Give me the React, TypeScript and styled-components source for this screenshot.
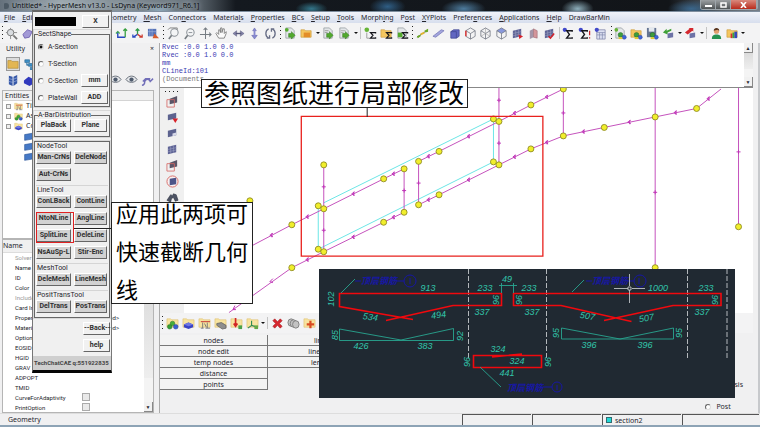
import React from "react";
import styled, { createGlobalStyle, css } from "styled-components";

const Global = createGlobalStyle`
  * { box-sizing: border-box; }
  html, body, #root { height: 100%; margin: 0; }
  body { overflow: hidden; font: 7px/10px "Noto Sans", sans-serif; color: #26262e; background: #f0f0f0; }
  button, input, fieldset, legend, h2, ul, p { margin: 0; padding: 0; font: inherit; color: inherit; border: 0; }
  ul { list-style: none; }
  svg { display: block; }
`;

/* ---------- window frame ---------- */

const Window = styled.div`
  position: relative;
  display: flex;
  flex-direction: column;
  height: 100vh;
  background: #f0f0f1;
  border-bottom: 2px solid #8da3b5;
`;

const TitleBar = styled.header`
  display: flex;
  align-items: center;
  justify-content: space-between;
  flex: 0 0 12px;
  padding: 0 2px 0 4px;
  background:
    radial-gradient(ellipse 16px 8px at 21% 100%, #8ba6b8, transparent),
    radial-gradient(ellipse 16px 7px at 41% 80%, #33768a, transparent),
    radial-gradient(ellipse 18px 9px at 51% 60%, #2f5e85, transparent),
    radial-gradient(ellipse 22px 9px at 61% 80%, #4d7b9d, transparent),
    radial-gradient(ellipse 16px 9px at 76% 80%, #8daebb, transparent),
    radial-gradient(ellipse 24px 9px at 91% 80%, #3a668b, transparent),
    linear-gradient(90deg, #65717c 0, #9ba7ae 8%, #7b878f 18%, #6a757e 25%, #14191f 31%, #121519 88%, #59636c 95%, #777f88 100%);
  border-bottom: 1px solid #7f8e9e;
`;

const Title = styled.h1`
  display: flex;
  align-items: center;
  gap: 2px;
  margin: 0;
  font: 7px/11px "Noto Sans", sans-serif;
  color: #0b0d10;
  text-shadow: 0 0 4px #c3ccd2;
  white-space: nowrap;
`;

const WindowButtons = styled.div`
  display: flex;
  align-self: flex-start;
  border: 1px solid #9ea6ac;
  border-top: 0;
  border-radius: 0 0 3px 3px;
  overflow: hidden;
`;

const WindowButton = styled.button<{ $close?: boolean }>`
  display: grid;
  place-items: center;
  width: ${(p) => (p.$close ? 26 : 15)}px;
  height: 9px;
  background: ${(p) => (p.$close ? "linear-gradient(#d98a7d, #b92b1c)" : "linear-gradient(#9b9fa2, #4f5456)")};
  border-right: 1px solid #9ea6ac;
`;

const MenuBar = styled.nav`
  display: flex;
  align-items: center;
  gap: 7px;
  flex: 0 0 11px;
  padding: 0 4px;
  background: linear-gradient(#f0f3fa, #d7deed);
`;

const MenuItem = styled.button`
  background: none;
  line-height: 10px;
  white-space: nowrap;
  u { text-underline-offset: 1px; }
`;

const ToolBar = styled.div<{ $bottom?: boolean }>`
  display: flex;
  flex: 0 0 20px;
  background: #f3f3f4;
  ${(p) => p.$bottom && css`
    gap: 2px;
    padding-left: 2px;
    align-items: center;
  `}
`;

const ToolGroup = styled.div<{ $grow: number }>`
  display: flex;
  flex: ${(p) => p.$grow} 1 0;
  align-items: center;
  justify-content: space-between;
  padding: 0 1px 0 2px;
`;

const ToolButton = styled.button`
  display: grid;
  place-items: center;
  width: 14px;
  height: 14px;
  background: none;
`;

const Grip = styled.span<{ $across?: boolean }>`
  flex: none;
  width: ${(p) => (p.$across ? 14 : 1)}px;
  height: ${(p) => (p.$across ? 1 : 14)}px;
  background: repeating-linear-gradient(${(p) => (p.$across ? "90deg" : "180deg")}, #222 0 1px, transparent 1px 4px);
`;

const Separator = styled.span`
  width: 1px;
  height: 12px;
  background: #c4c4c4;
`;

const DropMark = styled.span`
  width: 4px;
  border: 2px solid transparent;
  border-top-color: #111;
  border-bottom: 0;
`;

/* ---------- icons ---------- */

const folder = <path d="M1 3h4l1 1h6v7H1z" fill="#f4c65f" stroke="#cb9b3c" strokeWidth=".7" />;
const paleFolder = <path d="M1 2h4l1 1h7v8H1z" fill="#f8e4a0" stroke="#dcbc69" strokeWidth=".6" />;
const page = <path d="M2 1h6l3 3v8H2z" fill="#e3e6e9" stroke="#92989d" strokeWidth=".8" />;
const sigma = <path d="M12.5 7V6H7l2.7 3L7 12h5.5v-1" fill="none" stroke="#16161c" strokeWidth="1.3" />;
const greenArrow = <path d="M5 7h3V5l4 4-4 4v-2H5z" fill="#52a92d" stroke="#297116" strokeWidth=".5" />;
const blobs = <g strokeWidth=".5"><circle cx="7" cy="8.5" r="2.6" fill="#3c9d3c" stroke="#206220" /><circle cx="11" cy="11" r="2.2" fill="#3e64d8" stroke="#213b98" /><path d="M5 11h4v2H5z" fill="#e3cd31" /></g>;
const mesh = <><path d="M2 4l9-2v8l-9 2z" fill="#5f6496" /><path d="M2 7l9-2M2 9.500l9-2M5 3.300v8M8 2.700v8" stroke="#a5a9c9" strokeWidth=".5" /></>;
const cubeLines = <path d="M2 4l5-3 5 3v6l-5 3-5-3zM2 4l5 3 5-3M7 7v6" fill="none" stroke="#6a707c" strokeWidth=".8" />;
const lens = <><circle cx="8" cy="6" r="4" fill="#f4f5f6" stroke="#8b9197" strokeWidth="1.100" /><path d="M5 9l-3 4" stroke="#777d82" strokeWidth="1.800" /></>;

const glyphs: Record<string, React.ReactNode> = {
  fit: <><path d="M6 1v12M1 6h12" stroke="#777" strokeWidth=".8" /><circle cx="6" cy="6" r="3.500" fill="#d9dce0" stroke="#777" /><path d="M9 9l4 4" stroke="#777" strokeWidth="2" /></>,
  rotateBox: <path d="M2 8l5-5 5 2-3 6-5 1z" fill="#a299d6" stroke="#7465b2" />,
  axesXZ: <><path d="M3 5v6h8" fill="none" stroke="#2947c2" strokeWidth="1.500" /><path d="M1 7l2-2 2 2" fill="none" stroke="#3ba350" strokeWidth="1.200" /><path d="M11 11V2M9 4l2-2 2 2" fill="none" stroke="#38a041" strokeWidth="1.400" /></>,
  axesIso: <g fill="none" strokeWidth="1.400"><path d="M7 8V2M5 4l2-2 2 2" stroke="#2e9a47" /><path d="M7 8l-5 3M2 8v3h3" stroke="#2947c2" /><path d="M7 8l5 3M12 8v3H9" stroke="#cd3b2f" /></g>,
  viewCube: <><path d="M1 2h9v8H1z" fill="#5673b8" /><path d="M3 2v8M5.500 2v8M1 5h9" stroke="#a9bae2" strokeWidth=".6" /><path d="M8 7l5 5H6z" fill="#d65b2d" /></>,
  zoomBack: <>{lens}<path d="M1 3l2-2h8v2" fill="none" stroke="#777" strokeWidth=".9" /></>,
  zoom: <>{lens}<path d="M6 6h4" stroke="#8b9197" /></>,
  cross: <path d="M7 1v12M1 8h12M5 3l2-2 2 2M11 6l2 2-2 2" fill="none" stroke="#767c83" strokeWidth="1.100" />,
  hand: <path d="M4 12L1 7l1-1 2 2V3h1l1 3V1h1.500v5l1-4H10v5l2-2v2l-2 5z" fill="#fafafa" stroke="#777" strokeWidth=".9" />,
  leftRight: <><path d="M1 7l4-3v6zM13 7L9 4v6z" fill="#8282a8" stroke="#565678" strokeWidth=".5" /><path d="M4 7h6" stroke="#565678" strokeWidth="1.500" /></>,
  upDown: <><path d="M7 1L5 4h4zM7 13l-3-4h6z" fill="#8789cf" stroke="#5658a5" strokeWidth=".5" /><path d="M7 3v7" stroke="#8789cf" strokeWidth="2" /></>,
  spin: <path d="M5 2C1 4 1 10 5 12M3 12h3v-3M9 2c4 2 4 8 0 10M11 2H8v3" fill="none" stroke="#686e86" strokeWidth="1.400" />,
  newPage: <>{page}{greenArrow}<circle cx="3" cy="3" r="2" fill="#55ac2e" /></>,
  openFolder: <>{folder}<path d="M4 6h7v5H4z" fill="#e38d28" /></>,
  utilityFolder: <path d="M1 3h4l1 1h7v8H1z" fill="#e2b653" stroke="#ad842d" strokeWidth=".7" />,
  savePage: <>{page}<path d="M3 4h4M3 6h3" stroke="#999" />{greenArrow}</>,
  exportPage: <>{page}<path d="M3 4h5M3 6h3" stroke="#aaa" />{greenArrow}</>,
  addSigma: <><circle cx="3" cy="3" r="2.500" fill="#66b536" /><path d="M3 6v6h3" fill="none" stroke="#999" />{sigma}</>,
  folderSigma: <>{folder}{sigma}</>,
  pageSigma: <>{page}<path d="M2 6h5v5H2z" fill="#52a92d" />{sigma}</>,
  segment: <><path d="M1 11l12-8" stroke="#60686f" /><path d="M1 10l4-2v2l-3 2zM9 4l4-2v3l-3 1z" fill="#6aa826" /><path d="M5 8l4-2" stroke="#e1b52f" strokeWidth="2" /></>,
  beam: <path d="M1 10l9-7 3 1-9 7z" fill="#a3a5dd" stroke="#7779b8" strokeWidth=".8" />,
  solid: <path d="M3 5l3-2h6v7l-3 2H3zM3 5h6v7" fill="#6267c2" stroke="#41468f" strokeWidth=".8" />,
  cubeRed: <>{cubeLines}<path d="M2 4v6" stroke="#df3131" strokeWidth="1.500" /></>,
  cubeWire: <>{cubeLines}<path d="M7 1v6M2 10l5-3 5 3" fill="none" stroke="#999" strokeWidth=".6" /></>,
  cubeBlue: <><path d="M2 4l5-3 5 3-5 3z" fill="#8998dc" />{cubeLines}</>,
  mesh,
  meshRed: <>{mesh}<path d="M8 8l5 2-4 3z" fill="#d8222a" /></>,
  meshPink: <><path d="M3 4l4-2v9l-4 2z" fill="#a495a9" /><path d="M7 2l4 2v8l-4-1z" fill="#d4959a" stroke="#8b5560" strokeWidth=".5" /></>,
  meshCheck: <>{mesh}<path d="M6 10l2 2 4-5" fill="none" stroke="#d2232b" strokeWidth="1.700" /></>,
  meshBox: <><path d="M4 4l8-3v7l-8 2z" fill="#5a5668" /><path d="M1 5h8v8H1z" fill="none" stroke="#d66a66" strokeWidth=".9" /></>,
  meshRing: <><circle cx="7" cy="7" r="6" fill="#faf1f1" stroke="#d66a66" /><path d="M4 4l7-1v7l-7 1z" fill="#4d5488" /></>,
  meshHeart: <><path d="M2 4l9-2v6l-9 2z" fill="#5c628f" /><path d="M7 8h6l-3 5z" fill="#d8222a" /></>,
  meshSmall: <><path d="M2 4l9-2v7l-9 2z" fill="#5c628f" /><path d="M7 7l4-1v3l-4 1z" fill="#d6d8e8" /></>,
  binoculars: <path d="M1 10l4-6 2 1 1-2 3 1 2 6-3 1-2-4-2 1-1 4z" fill="#4d5364" stroke="#2a2f3d" strokeWidth=".6" />,
  sumInfo: <><circle cx="3" cy="3" r="2.300" fill="#4149c9" /><path d="M11 5V4H5l3 4-3 4h6v-1" fill="none" stroke="#16161c" strokeWidth="1.500" /></>,
  sumAlert: <><circle cx="3" cy="3" r="2.300" fill="#4149c9" /><path d="M10 5V4H4l3 4-3 4h6v-1" fill="none" stroke="#16161c" strokeWidth="1.500" /><path d="M12.500 4v5M12.500 11v1.500" stroke="#c7202a" strokeWidth="1.300" /></>,
  calc: <><path d="M3 3h9v10H3z" fill="#dce0f1" stroke="#7c83a8" strokeWidth=".8" /><path d="M3 6h9M3 8.500h9M6 6v7M9 6v7" stroke="#7c83a8" strokeWidth=".7" /><circle cx="3" cy="3" r="2.300" fill="#4149c9" /></>,
  newBlobs: <>{page}{blobs}<circle cx="2.500" cy="3" r="2" fill="#68b435" /></>,
  folderBlobs: <>{folder}{blobs}</>,
  disk: <><path d="M1 1h10v10H1z" fill="#657492" /><path d="M3 1h6v4H3z" fill="#e4e9ef" />{blobs}</>,
  importMesh: <><path d="M1 6l4-4v2l5-2v2L6 6v2z" fill="#40a137" /><path d="M6 7l6-1v5l-6 1z" fill="#6d72a6" /></>,
  exportMesh: <><path d="M1 6l5-4-1-1h5v4L9 4 4 8z" fill="#d4282e" /><path d="M6 7l6-1v5l-6 1z" fill="#6d72a6" /></>,
  person: <><path d="M2 13c0-4 2-5 5-5s5 1 5 5z" fill="#259251" /><circle cx="7" cy="4.500" r="2.800" fill="#dfa06f" /><path d="M4 4c0-4 6-4 6 0L8 3z" fill="#56341d" /></>,
  folderBars: <>{folder}<path d="M5 12V7h2v5z" fill="#d32f2f" /><path d="M7 12V6h2v6z" fill="#35a641" /><path d="M9 12V5h3v7z" fill="#3448bc" /></>,
  component: <>{paleFolder}<g strokeWidth=".5"><circle cx="7" cy="7" r="2.500" fill="#46ad3a" stroke="#236a20" /><circle cx="4" cy="10.500" r="2.500" fill="#35a034" stroke="#236a20" /><circle cx="10.500" cy="10.500" r="2.500" fill="#3a5fd0" stroke="#213b98" /></g></>,
  block: <>{paleFolder}<path d="M2 8l5-2 5 2v3l-5 2-5-2z" fill="#3943c7" /><path d="M2 8l5-2 5 2-5 2z" fill="#7078e3" /></>,
  ibeam: <>{paleFolder}<path d="M3 5h10" stroke="#cc4b3e" strokeWidth="1.200" /><path d="M3 12h3M8 12h5M5 6v6M10 6v6M7 7l2 4" stroke="#777" /></>,
  stack: <>{paleFolder}<path d="M3 7l5-1 5 3v3l-4 1-6-4z" fill="#8e8e8e" stroke="#555" strokeWidth=".7" /></>,
  load: <>{paleFolder}<path d="M6 1v8M4 7l2 3 2-3" fill="none" stroke="#d22525" strokeWidth="1.800" /><path d="M9 9h4v4H9z" fill="#4ba24b" /></>,
  system: <>{paleFolder}<path d="M6 4v5l-4 3M6 9l6 2" fill="none" stroke="#2f8b54" strokeWidth="1.200" /><path d="M9 9h4v4H9z" fill="#65a845" /></>,
  remove: <path d="M2 4l2-2 3 3 3-3 2 2-3 3 3 3-2 2-3-3-3 3-2-2 3-3z" fill="#d7282f" stroke="#9f191f" strokeWidth=".6" />,
  rings: <g fill="#c3c3c3" stroke="#777" strokeWidth=".9"><ellipse cx="4.500" cy="6" rx="3.500" ry="4" /><ellipse cx="7" cy="7" rx="3.500" ry="4" /><ellipse cx="9.500" cy="8" rx="3.500" ry="4" /></g>,
  folderPlus: <>{paleFolder}<path d="M4 8h8M8 4v8" stroke="#d94b22" strokeWidth="2.400" /></>,
  tree: <path d="M2 3h5v3H2zM6 7h5v3H6zM8 11h5v3H8zM4 6v3h2" fill="#3d8fc6" stroke="#2a6796" strokeWidth=".7" />,
  blueMesh: <><path d="M2 2l4 1v10l-4-2zM7 3l4-2v9l-4 3z" fill="#3658a7" /><path d="M2 5l4 1 5-2M2 8l4 1 5-2" stroke="#9cb2e1" strokeWidth=".7" fill="none" /></>,
  part: <path d="M1 4l12-2v9L1 13z" fill="#4679c6" stroke="#2d579b" />,
  blueBlock: <path d="M1 7l5-4 6 3v4l-5 3-6-3z" fill="#3139bd" />,
  eye: <><path d="M1 6c3-5 9-5 12 0-3 4-9 4-12 0z" fill="#e5e7ea" stroke="#666d78" /><circle cx="7" cy="6" r="2.300" fill="#4f5b6d" /></>,
  undo: <path d="M1 12c2 0 3-1 3-4 1-3 5-3 6 0l3-3M2 8l3-3h5" fill="none" stroke="#716eb8" strokeWidth="1.600" />,
};

const Icon = ({ name, size = 14 }: { name: string; size?: number }) => (
  <svg width={size} height={size} viewBox="0 0 14 14" aria-hidden="true">{glyphs[name]}</svg>
);

const Tools = ({ items }: { items: string }) => (
  <>
    {items.split(" ").map((t, i) =>
      t === ":" ? <Grip key={i} /> : t === "|" ? <Separator key={i} /> : t === "v" ? <DropMark key={i} /> : (
        <ToolButton key={i} aria-label={t}><Icon name={t} size={13} /></ToolButton>
      ))}
  </>
);

/* ---------- left browser ---------- */

const Body = styled.main`
  display: flex;
  flex: 1;
  min-height: 0;
`;

const Browser = styled.aside`
  display: flex;
  flex-direction: column;
  flex: 0 0 160px;
  padding: 0 5px 0 2px;
  border-right: 1px solid #aaa;
`;

const BrowserTop = styled.div`
  display: grid;
  grid-template-rows: 12px 17px 17px;
  height: 47px;
  padding-left: 4px;
`;

const TabRow = styled.div`
  display: flex;
  justify-content: space-between;
  align-items: center;
`;

const TabButton = styled.button`
  background: none;
  line-height: 10px;
`;

const IconRow = styled.div`
  display: flex;
  align-items: center;
  gap: 2px;
`;

const Spacer = styled.span`
  flex: 1;
`;

const PressedButton = styled(ToolButton)`
  background: #dcdcdc;
  border: 1px solid #999;
`;

const TreePane = styled.section`
  flex: 0 0 149px;
  background: #fff;
  border: 1px solid #b5b5b5;
`;

const PaneHead = styled.h2`
  height: 10px;
  padding-left: 2px;
  font-size: 7px;
  font-weight: 400;
  line-height: 10px;
  background: #f1f1f1;
  border-bottom: 1px solid #d4d4d4;
`;

const TreeRow = styled.li<{ $depth?: number }>`
  display: flex;
  align-items: center;
  gap: 3px;
  height: 10px;
  padding-left: ${(p) => (p.$depth ? 21 : 3)}px;
`;

const Expander = styled.span`
  width: 5px;
  height: 5px;
  border: 1px solid #999;
  background: #eee;
`;

const ScrollPane = styled.section`
  display: flex;
  flex: 1;
  min-height: 0;
  background: #fff;
  border: 1px solid #b5b5b5;
`;

const PropertyTable = styled.table`
  flex: 1;
  align-self: flex-start;
  width: 100%;
  border-collapse: collapse;
  table-layout: fixed;
  th { height: 12px; padding: 0; text-align: left; font-weight: 400; background: #f0f0f0; border-bottom: 1px solid #ddd; }
  th + th { padding-left: 8px; }
  td { height: 10px; padding: 0 0 0 8px; font: 6px/9px Roboto, sans-serif; white-space: nowrap; }
`;

const KeyCell = styled.td<{ $dim?: boolean }>`
  && { padding-left: 12px; }
  color: ${(p) => (p.$dim ? "#999" : "inherit")};
`;

const TickBox = styled.input`
  display: block;
  appearance: none;
  width: 8px;
  height: 8px;
  border: 1px solid #aaa;
  background: #e9e9e9;
`;

const ScrollBar = styled.div<{ $thumb: string }>`
  display: flex;
  flex-direction: column;
  justify-content: space-between;
  flex: 0 0 9px;
  background: linear-gradient(transparent 15%, #d8d8d8 15%, #eee ${(p) => p.$thumb}, transparent ${(p) => p.$thumb}) #f4f4f4;
`;

const ScrollButton = styled.button`
  height: 10px;
  font-size: 5px;
  line-height: 8px;
  background: #f1f1f1;
  border-right: 1px solid #888;
  border-bottom: 1px solid #888;
`;

/* ---------- right column ---------- */

const WorkColumn = styled.div`
  display: flex;
  flex-direction: column;
  flex: 1;
  min-width: 0;
  padding-right: 5px;
  border-right: 2px solid #c7c9cc;
`;

const Console = styled.section`
  display: flex;
  justify-content: space-between;
  flex: 0 0 45px;
  background: #fff;
  border-bottom: 1px solid #888;
`;

const ConsoleText = styled.pre`
  margin: 0;
  padding-left: 2px;
  font: 7px/8px "Liberation Mono", monospace;
  color: #3a3ab2;
  span { color: #777; }
`;

const GraphicsRow = styled.section`
  display: flex;
  flex: 0 0 225px;
  background: #fff;
`;

const IconStrip = styled.div`
  display: flex;
  flex-direction: column;
  align-items: center;
  gap: 2px;
  flex: 0 0 24px;
  padding-top: 3px;
  background: #f0f0f0;
`;

const Viewport = styled.div`
  flex: 1;
  min-width: 0;
  svg { width: 100%; height: 100%; }
`;

const CommandPanel = styled.section`
  display: flex;
  flex: 1;
  justify-content: space-between;
  min-height: 0;
`;

const CommandGrid = styled.div`
  display: grid;
  grid-template-columns: 108px 108px;
  grid-auto-rows: 11px;
  padding-top: 2px;
`;

const Command = styled.button<{ $blank?: boolean }>`
  visibility: ${(p) => (p.$blank ? "hidden" : "visible")};
  line-height: 9px;
  background: #f3f3f3;
  border-right: 1px solid #777;
  border-bottom: 1px solid #777;
`;

const PageChoices = styled.div`
  display: flex;
  flex-direction: column;
  justify-content: flex-end;
  gap: 12px;
  padding-right: 10px;
  padding-bottom: 1px;
`;

const Choice = styled.label<{ $gap?: number }>`
  display: flex;
  align-items: center;
  gap: ${(p) => p.$gap ?? 5}px;
  line-height: 10px;
  white-space: nowrap;
`;

const Radio = styled.input`
  appearance: none;
  width: 6px;
  height: 6px;
  border: 1px solid #666;
  border-right-color: #ddd;
  border-bottom-color: #ddd;
  border-radius: 50%;
  background: #fff;
  &:checked { background: radial-gradient(#111 0 1px, #fff 2px); }
`;

const StatusBar = styled.footer`
  display: grid;
  grid-template-columns: 462fr 70fr 70fr 80fr 78fr;
  flex: 0 0 12px;
  border-top: 1px solid #ddd;
`;

const StatusCell = styled.div<{ $plain?: boolean }>`
  display: flex;
  align-items: center;
  gap: 3px;
  padding-left: ${(p) => (p.$plain ? 8 : 3)}px;
  line-height: 9px;
  ${(p) => !p.$plain && css`
    border-top: 1px solid #555;
    border-left: 1px solid #555;
    margin-right: 1px;
  `}
`;

const Swatch = styled.span`
  width: 6px;
  height: 6px;
  background: #20d9d6;
  border: 1px solid #306d73;
`;

/* ---------- floating tool dialog ---------- */

const Dialog = styled.section`
  position: absolute;
  left: 32px;
  top: 10px;
  width: 80px;
  background: #f0f0f0;
  border: 1px solid #777;
  border-top: 2px solid #666;
  border-bottom: 3px solid #050505;
  padding: 1px 1px 0;
  font: 7px/9px Roboto, sans-serif;
`;

const DialogHead = styled.div`
  display: flex;
  justify-content: space-between;
  align-items: center;
  height: 17px;
  padding: 0 1px;
`;

const NameField = styled.input`
  width: 41px;
  height: 9px;
  background: #000;
`;

const RaisedButton = styled.button<{ $wide?: boolean; $dark?: boolean }>`
  flex: none;
  width: ${(p) => (p.$wide ? 35 : 33)}px;
  height: 13px;
  font-weight: 700;
  font-size: 7px;
  line-height: 11px;
  white-space: nowrap;
  color: #303030;
  background: ${(p) => (p.$dark ? "#d2d2d2" : "#f1f1f1")};
  border: 1px solid #fff;
  border-right-color: #666;
  border-bottom-color: #666;
`;

const Group = styled.fieldset`
  min-width: 0;
  border: 1px solid #666;
  outline: 1px solid #d8d8d8;
  padding: 0 1px;
  margin-bottom: 4px;
`;

const Legend = styled.legend`
  font-size: 7px;
  line-height: 8px;
  margin-left: 2px;
`;

const FrameBox = styled.div`
  border: 1px solid #666;
  outline: 1px solid #d8d8d8;
  padding: 0 1px;
`;

const Section = styled.fieldset`
  min-width: 0;
  & + & { border-top: 1px solid #d5d5d5; }
`;

const SectionTitle = styled.legend`
  float: left;
  width: 100%;
  height: 9px;
  padding-left: 1px;
  line-height: 9px;
`;

const ButtonRow = styled.div`
  display: flex;
  clear: both;
  gap: 3px;
  height: 17px;
`;

const ShapeRow = styled.div`
  display: flex;
  align-items: center;
  justify-content: space-between;
  height: 17px;
  padding-left: 2px;
`;

const ShapeButton = styled(RaisedButton)`
  width: 27px;
`;

const DialogActions = styled.div`
  display: flex;
  flex-direction: column;
  align-items: flex-end;
  gap: 4px;
  padding: 4px 0 4px;
`;

const Credit = styled.p`
  height: 14px;
  margin: 0 -1px;
  padding-left: 1px;
  font-weight: 700;
  font-size: 6px;
  line-height: 13px;
  white-space: nowrap;
  color: #444;
  background: #cfcfcf;
`;

/* ---------- annotations over the window ---------- */

const Callout = styled.div`
  position: absolute;
  left: 201px;
  top: 79px;
  width: 267px;
  padding: 0 2px 3px;
  color: #000;
  background: #fff;
  border: 1px solid #222;
  font: 26px/24px "Noto Sans CJK SC", sans-serif;
  white-space: nowrap;
`;

const SideCallout = styled(Callout)`
  left: 111px;
  top: 202px;
  width: 142px;
  height: 102px;
  padding: 0 4px;
  font-size: 22px;
  line-height: 38px;
`;

const CalloutLines = styled.div`
  margin-top: -10px;
`;

const Highlight = styled.div`
  position: absolute;
  left: 36px;
  top: 212px;
  width: 38px;
  height: 31px;
  border: 1px solid #e02222;
  &::after { content: ""; position: absolute; left: 37px; top: 15px; width: 38px; border-top: 1px solid #222; }
`;

const CadSheet = styled.figure`
  position: absolute;
  left: 319px;
  top: 269px;
  width: 416px;
  margin: 0;
  background: #202932;
`;

const nodes = [
  [324, 165], [318.5, 206], [324, 209], [292, 225], [250, 201], [318.5, 249.5], [324, 252], [292, 268],
  [384, 179], [404.5, 169], [419, 161.5], [439.5, 151.5], [384, 222.5], [404.5, 212.5], [419, 205], [439.5, 195],
  [494, 119], [499.5, 121.5], [531.5, 105], [564, 89], [494, 162], [499.5, 165], [531.5, 149], [564, 136],
  [605, 127.5], [656, 117], [697.5, 108.5], [739.5, 227], [656, 268],
];

const members = [
  [229, 313, 292, 268, 0], [292, 268, 324, 252, 1], [324, 252, 384, 222.5, 1], [384, 222.5, 404.5, 212.5, 1],
  [419, 205, 439.5, 195, 1], [439.5, 195, 499.5, 165, 1], [499.5, 165, 531.5, 149, 1], [531.5, 149, 564, 136, 1],
  [564, 136, 605, 127.5, 1], [605, 127.5, 656, 117, 1], [656, 117, 697.5, 108.5, 1], [697.5, 108.5, 722, 89, 1],
  [252, 246, 292, 225, 1], [292, 225, 324, 209, 1], [324, 209, 384, 179, 1], [384, 179, 404.5, 169, 1],
  [419, 161.5, 439.5, 151.5, 1], [439.5, 151.5, 499.5, 121.5, 1], [499.5, 121.5, 531.5, 105, 1], [531.5, 105, 564, 89, 1],
  [324, 165, 324, 209, 1], [324, 209, 324, 252, 1], [404.5, 169, 404.5, 212.5, 1], [419, 161.5, 419, 205, 1],
  [499.5, 79, 499.5, 121.5, 1], [499.5, 121.5, 499.5, 165, 1], [564, 90, 564, 136, 1], [656, 80, 656, 117, 0],
  [656, 117, 656, 268, 1], [739.5, 77, 739.5, 227, 1],
];

const Model = () => (
  <svg viewBox="184 88 570 225" preserveAspectRatio="xMinYMin meet">
    <g fill="none" stroke="#6be6e6">
      <path d="M318.500 206V249.500L494 162V119L324 203" />
    </g>
    <g stroke="#c552bd" strokeWidth="1">
      {members.map(([x1, y1, x2, y2], i) => <line key={i} x1={x1} y1={y1} x2={x2} y2={y2} />)}
    </g>
    <g fill="none" stroke="#c034b8" strokeWidth="1">
      {members.filter((m) => m[4]).map(([x1, y1, x2, y2], i) => {
        const x = (x1 + x2) / 2, y = (y1 + y2) / 2;
        return <path key={i} d={x1 === x2 ? `M${x - 2} ${y}h4M${x} ${y - 2}v4` : `M${x + 1} ${y - 2}l-3 2 3 1.500M${x} ${y - 2}v4`} />;
      })}
      <path d="M273 279l-3 3 3 1M235 306l-2 4 3 0" />
    </g>
    <g fill="#f1ee2c" stroke="#8f8c23" strokeWidth=".9">
      {nodes.map(([cx, cy], i) => <circle key={i} cx={cx} cy={cy} r="3" />)}
    </g>
    <path d="M301.500 116.500h242v140h-242z" fill="none" stroke="#e8211d" strokeWidth="1.300" />
    <path d="M367.500 107v10" stroke="#222" />
  </svg>
);

const dims: [string, number, number, number?][] = [
  ["913", 428, 291], ["233", 485, 291], ["49", 507, 282], ["233", 529, 291], ["1000", 658, 291], ["233", 706, 291],
  ["102", 331, 299, -90], ["96", 496, 300, -90], ["96", 519, 300, -90], ["96", 715, 300, -90],
  ["534", 370, 320, 8], ["494", 439, 318, -8], ["337", 482, 315], ["337", 532, 315], ["507", 587, 319, 10], ["507", 647, 321, -10], ["337", 702, 315],
  ["85", 335, 335, -90], ["92", 460, 336, -90], ["426", 361, 349], ["383", 425, 349],
  ["95", 556, 333, -90], ["95", 679, 333, -90], ["396", 589, 348], ["396", 645, 348],
  ["324", 498, 352], ["324", 517, 364], ["441", 507, 376], ["96", 467, 362, -90], ["96", 548, 362, -90],
];

const CadLabel = styled.text`
  font: italic 9px "Liberation Sans", sans-serif;
  fill: #32c5aa;
  text-anchor: middle;
`;

const CadNote = styled.text`
  font: italic 700 9px "Noto Sans CJK SC", sans-serif;
  fill: #1717a4;
`;

const Cad = () => (
  <CadSheet>
    <svg viewBox="319 269 416 129">
      <path d="M468.500 269V358M546.500 269V358M687.500 269V358M727 269V358" stroke="#b3b8bc" strokeDasharray="5 2" />
      <g fill="none" stroke="#f0090e" strokeWidth="1.600">
        <path d="M413 319.500L339.500 306.500V293.500H501.500V305.500H453L386 320.500" />
        <path d="M631.500 321.500L561 305.500H513.500V293.500H721V305.500H673L604 320.500" />
        <path d="M473.500 355.500h68v12h-68zM492 357l30-3" />
      </g>
      <g fill="none" stroke="#28a590" strokeWidth=".9">
        <path d="M339.500 329v11.500h114v-12L401 340zM561.500 328v11h112v-11L620 339z" />
        <path d="M501.500 283v10M513.500 283v10M499 285.500h18M341 293l14-14M572 292l12-12M480 367l21 20" />
      </g>
      {dims.map(([t, x, y, r = 0], i) => (
        <CadLabel key={i} x={x} y={y} dy={r === -90 ? 3 : 0} transform={`rotate(${r} ${x} ${y})`}>{t}</CadLabel>
      ))}
      <CadNote x="361" y="284">顶层钢筋</CadNote>
      <CadNote x="592" y="284">顶层钢筋</CadNote>
      <CadNote x="507" y="391">顶层钢筋</CadNote>
      <g fill="none" stroke="#1717a4">
        <circle cx="410" cy="281" r="6" /><circle cx="640" cy="281" r="6" /><circle cx="557" cy="387" r="5" />
        <path d="M397 281h7M628 281h6M543 387h9M410 278v6M639 278v6M557 385v5M355 281h6M586 281h6" />
      </g>
      <path d="M629.500 274v12M629.500 290v13M614 288.500h14M632 288.500h13" stroke="#d3d6d8" strokeWidth=".8" />
      <path d="M628 287h3v3h-3z" fill="none" stroke="#d3d6d8" strokeWidth=".8" />
    </svg>
  </CadSheet>
);

const menus = ["_File", "_Edit", "_View", "_Collectors", "_Geometry", "_Mesh", "Con_nectors", "Materia_ls", "_Properties", "_BCs", "_Setup", "_Tools", "Morph_ing", "P_ost", "_XYPlots", "Prefer_ences", "_Applications", "_Help", "DrawBarMin"];

const properties: [string, React.ReactNode?, boolean?][] = [
  ["Solver Keyword", "", true], ["Name"], ["ID"], ["Color"], ["Include", "", true], ["Card Image"],
  ["Property", "<Unspecified>"], ["Material", "<Unspecified>"], ["Options"], ["EOSID"], ["HGID"], ["GRAV"], ["ADPOPT"], ["TMID"],
  ["CurveForAdaptivity", <TickBox type="checkbox" aria-label="CurveForAdaptivity" />],
  ["PrintOption", <TickBox type="checkbox" aria-label="PrintOption" />],
];

const sections: [string, string[][]][] = [
  ["NodeTool", [["Man-CrNs", "DeleNode"], ["Aut-CrNs"]]],
  ["LineTool", [["ConLBack", "ContLine"], ["NtoNLine", "AnglLine"], ["SplitLine", "DeleLine"], ["NsAuSp-L", "Stir-Enc"]]],
  ["MeshTool", [["DeleMesh", "LineMesh"]]],
  ["PositTransTool", [["DelTrans", "PosTrans"]]],
];

const shapes = [["A-Section"], ["T-Section"], ["C-Section", "mm"], ["PlateWall", "ADD"]];

const commands = ["nodes", "lines", "node edit", "line edit", "temp nodes", "length", "distance", "", "points", ""];

export default function App() {
  return (
    <Window>
      <Global />
      <TitleBar>
        <Title>
          <svg width="6" height="8" viewBox="0 0 6 8"><circle cx="2" cy="4" r="3" fill="#4c5964" /></svg>
          Untitled* - HyperMesh v13.0 - LsDyna (Keyword971_R6.1]
        </Title>
        <WindowButtons>
          <WindowButton aria-label="Minimize"><svg width="7" height="6"><path d="M0 4h7" stroke="#fff" strokeWidth="2" /></svg></WindowButton>
          <WindowButton aria-label="Restore"><svg width="7" height="6"><path d="M1 1h5v4H1z" fill="none" stroke="#fff" strokeWidth="1.500" /></svg></WindowButton>
          <WindowButton $close aria-label="Close"><svg width="7" height="6"><path d="M1 0l5 6M6 0L1 6" stroke="#fff" strokeWidth="1.600" /></svg></WindowButton>
        </WindowButtons>
      </TitleBar>
      <MenuBar>
        {menus.map((m) => {
          const [a, b = ""] = m.includes("_") ? m.split("_") : [m];
          return <MenuItem key={m}>{a}<u>{b.slice(0, 1)}</u>{b.slice(1)}</MenuItem>;
        })}
      </MenuBar>
      <ToolBar>
        <ToolGroup $grow={162}><Tools items=": fit rotateBox zoom hand leftRight upDown axesXZ axesXZ axesIso viewCube" /></ToolGroup>
        <ToolGroup $grow={117}><Tools items=": zoomBack zoom cross hand leftRight upDown spin" /></ToolGroup>
        <ToolGroup $grow={132}><Tools items=": newPage openFolder v savePage exportPage v | addSigma folderSigma pageSigma" /></ToolGroup>
        <ToolGroup $grow={200}><Tools items=": segment beam solid cubeRed cubeWire cubeBlue meshRed meshPink meshCheck | sumInfo sumAlert calc" /></ToolGroup>
        <ToolGroup $grow={138}><Tools items=": newBlobs folderBlobs disk importMesh v exportMesh v | person folderBars v" /></ToolGroup>
        <ToolGroup $grow={11} />
      </ToolBar>
      <Body>
        <Browser>
          <BrowserTop>
            <TabRow><TabButton>Utility</TabButton><TabButton aria-label="Close tab">×</TabButton></TabRow>
            <IconRow><PressedButton aria-label="Folder"><Icon name="utilityFolder" size={12} /></PressedButton><Tools items="tree" /></IconRow>
            <IconRow><Tools items="blueMesh" /><Tools items="blueBlock" /><Spacer /><Tools items="eye eye undo" /></IconRow>
          </BrowserTop>
          <TreePane>
            <PaneHead>Entities</PaneHead>
            <ul>
              <TreeRow><Expander /><Icon name="ibeam" size={9} />Titles</TreeRow>
              <TreeRow><Expander /><Icon name="component" size={9} />Assembly</TreeRow>
              <TreeRow><Expander /><Icon name="block" size={9} />Component</TreeRow>
              {[1, 2, 3].map((n) => <TreeRow key={n} $depth={1}><Icon name="part" size={9} /></TreeRow>)}
            </ul>
          </TreePane>
          <ScrollPane>
            <PropertyTable>
              <thead><tr><th>Name</th><th>Value</th></tr></thead>
              <tbody>
                {properties.map(([k, v, dim]) => <tr key={k}><KeyCell $dim={dim}>{k}</KeyCell><td>{v}</td></tr>)}
              </tbody>
            </PropertyTable>
            <ScrollBar $thumb="80%"><ScrollButton aria-label="Scroll up">▲</ScrollButton><ScrollButton aria-label="Scroll down">▼</ScrollButton></ScrollBar>
          </ScrollPane>
        </Browser>
        <WorkColumn>
          <Console>
            <ConsoleText>{"Rvec :0.0 1.0 0.0\nRvec :0.0 1.0 0.0\nmm\nCLineId:101\n"}<span>(Documents</span></ConsoleText>
            <ScrollBar $thumb="60%"><ScrollButton aria-label="Scroll up">▲</ScrollButton><ScrollButton aria-label="Scroll down">▼</ScrollButton></ScrollBar>
          </Console>
          <GraphicsRow>
            <IconStrip><Grip $across /><Tools items="meshBox meshHeart meshSmall mesh meshBox meshRing binoculars" /></IconStrip>
            <Viewport><Model /></Viewport>
          </GraphicsRow>
          <ToolBar $bottom><Tools items=": component block ibeam stack load system v | remove rings folderPlus" /></ToolBar>
          <CommandPanel>
            <CommandGrid>{commands.map((c, i) => <Command key={i} $blank={!c}>{c}</Command>)}</CommandGrid>
            <PageChoices>
              <Choice><Radio type="radio" name="page" />Analysis</Choice>
              <Choice><Radio type="radio" name="page" />Post</Choice>
            </PageChoices>
          </CommandPanel>
        </WorkColumn>
      </Body>
      <StatusBar>
        <StatusCell $plain>Geometry</StatusCell>
        <StatusCell />
        <StatusCell />
        <StatusCell><Swatch />section2</StatusCell>
        <StatusCell />
      </StatusBar>

      <Dialog aria-label="Section tools">
        <DialogHead>
          <NameField aria-label="Name" />
          <ShapeButton>X</ShapeButton>
        </DialogHead>
        <Group>
          <Legend>SectShape</Legend>
          {shapes.map(([s, b], i) => (
            <ShapeRow key={s}>
              <Choice $gap={4}><Radio type="radio" name="shape" defaultChecked={i === 0} />{s}</Choice>
              {b && <ShapeButton>{b}</ShapeButton>}
            </ShapeRow>
          ))}
        </Group>
        <Group>
          <Legend>A-BarDistribution</Legend>
          <ButtonRow><RaisedButton $wide>PlaBack</RaisedButton><RaisedButton>Plane</RaisedButton></ButtonRow>
        </Group>
        <FrameBox>
          {sections.map(([name, rows]) => (
            <Section key={name}>
              <SectionTitle>{name}</SectionTitle>
              {rows.map(([a, b]) => (
                <ButtonRow key={a}>
                  <RaisedButton $wide $dark>{a}</RaisedButton>
                  {b && <RaisedButton $dark>{b}</RaisedButton>}
                </ButtonRow>
              ))}
            </Section>
          ))}
        </FrameBox>
        <DialogActions>
          <ShapeButton>--Back--</ShapeButton>
          <ShapeButton>help</ShapeButton>
        </DialogActions>
        <Credit>TechChatCAE q:551922835</Credit>
      </Dialog>

      <Highlight />
      <Callout>参照图纸进行局部修改</Callout>
      <SideCallout><CalloutLines>应用此两项可<br />快速截断几何<br />线</CalloutLines></SideCallout>
      <Cad />
    </Window>
  );
}
